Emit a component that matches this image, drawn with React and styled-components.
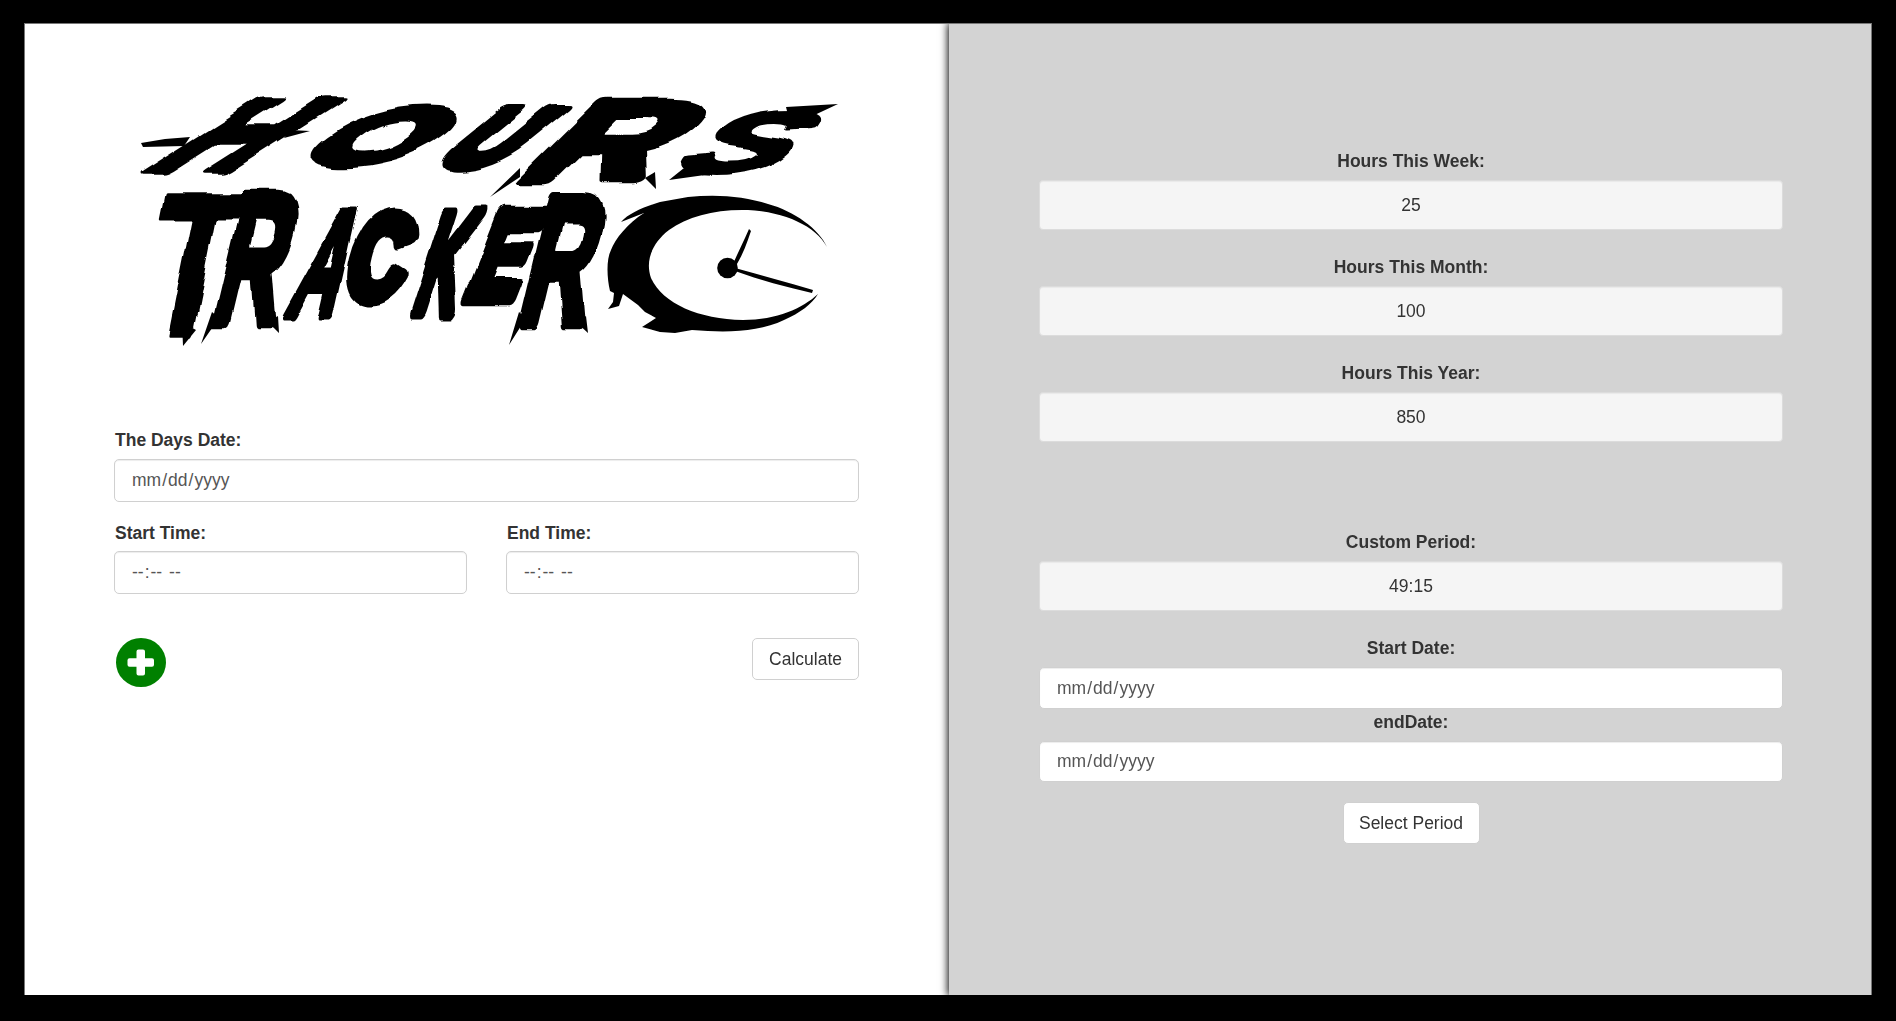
import React from "react";
import styled, { createGlobalStyle } from "styled-components";

const Global = createGlobalStyle`
  * { box-sizing: border-box; }
  html, body { margin: 0; padding: 0; background: #000; }
  body {
    font-family: "Liberation Sans", Arial, sans-serif;
    font-size: 17.5px;
    line-height: 24px;
    color: #333;
  }
`;

const Page = styled.div`
  height: 1021px;
  padding: 23px 24px 26px;
  background: #000;
  overflow: hidden;
`;

const Frame = styled.main`
  height: 972px;
  display: grid;
  grid-template-columns: 924px 922px;
  border: solid #777;
  border-width: 1px 1px 0;
  overflow: hidden;
`;

const EntryPanel = styled.section`
  background: #fff;
  padding: 6px 90px 0 89px;
`;

const SummaryPanel = styled.section`
  background: #d3d3d3;
  padding: 125px 88px 0 90px;
  box-shadow: 0 0 8px 1px #000;
`;

const Wordmark = styled.svg`
  display: block;
  width: 809px;
  height: 360px;
  margin: 0 0 38px -64px;
  overflow: visible;
`;

const Label = styled.label`
  display: block;
  height: 24px;
  font-weight: 700;
  padding-left: ${(p) => (p.$center ? 0 : 1)}px;
  margin-bottom: ${(p) => p.$gap ?? 7}px;
  text-align: ${(p) => (p.$center ? "center" : "left")};
`;

const FieldBox = styled.div`
  display: flex;
  align-items: center;
  height: ${(p) => p.$height ?? 43}px;
  padding: 0 16px 1px;
  margin-bottom: ${(p) => p.$after ?? 0}px;
  color: #555;
  background: #fff;
  border: 1px solid #d0d0d0;
  border-radius: 5px;
  box-shadow: inset 0 1px 1px rgba(0, 0, 0, 0.075);
`;

const Segment = styled.span`
  padding: 0 1px;
`;

const Separator = styled.span`
  white-space: pre;
`;

const TimeRow = styled.div`
  display: grid;
  grid-template-columns: 353px 353px;
  justify-content: space-between;
`;

const Actions = styled.div`
  display: flex;
  justify-content: space-between;
  align-items: flex-start;
  margin-top: 44px;
`;

const Button = styled.button`
  height: 42px;
  width: ${(p) => p.$width}px;
  padding: 0 0 1px;
  font: inherit;
  color: #333;
  background: #fff;
  border: 1px solid #d0d0d0;
  border-radius: 5px;
`;

const AddButton = styled.button`
  padding: 0;
  margin-left: 2px;
  border: 0;
  background: none;
  line-height: 0;
`;

const Well = styled.div`
  height: 50px;
  padding-top: 12px;
  text-align: center;
  background: #f5f5f5;
  border: 1px solid #dcdcdc;
  border-radius: 4px;
  box-shadow: inset 0 1px 1px rgba(0, 0, 0, 0.05);
  margin-bottom: ${(p) => p.$after}px;
`;

const Centered = styled.div`
  display: flex;
  justify-content: center;
`;

// Ink extents of each capital at a 100px font size.
const INK = {
  H: [6.7, 65.5], O: [4.1, 73.7], U: [6.1, 65.9], R: [6.7, 70.3], S: [3.2, 62.4],
  T: [2.1, 59], A: [0.6, 71.6], C: [4.2, 69.7], K: [6.7, 71.5], E: [6.7, 62.8],
};
const CAP = 68.8;

const LINES = [
  [
    { ch: "H", x: 148, w: 80, base: 171, h: 70, lean: 110, bold: 12 },
    { ch: "O", x: 298, w: 102, base: 163, h: 53, lean: 72, bold: 13 },
    { ch: "U", x: 437, w: 58, base: 165, h: 55, lean: 68, bold: 14 },
    { ch: "R", x: 522, w: 118, base: 180, h: 79, lean: 80, bold: 13 },
    { ch: "S", x: 670, w: 92, base: 172, h: 59, lean: 70, bold: 7 },
  ],
  [
    { ch: "T", x: 140, w: 82, base: 336, h: 141, lean: 28, bold: 3 },
    { ch: "R", x: 215, w: 58, base: 322, h: 126, lean: 30, bold: 10 },
    { ch: "A", x: 285, w: 48, base: 315, h: 104, lean: 40, bold: 9 },
    { ch: "C", x: 345, w: 52, base: 297, h: 80, lean: 20, bold: 13 },
    { ch: "K", x: 412, w: 42, base: 313, h: 100, lean: 32, bold: 12 },
    { ch: "E", x: 468, w: 45, base: 299, h: 86, lean: 34, bold: 11 },
    { ch: "R", x: 522, w: 58, base: 323, h: 125, lean: 30, bold: 10 },
  ],
];

function Letter({ ch, x, w, base, h, lean, bold }) {
  const [l, r] = INK[ch];
  const a = w / (r - l);
  const m = [a, 0, -lean / CAP, h / CAP, x - a * l, base];
  return (
    <text
      transform={`matrix(${m.join(" ")})`}
      fontFamily="Liberation Sans, Arial, sans-serif"
      fontWeight="700"
      fontSize="100"
      stroke="#000"
      strokeWidth={bold}
      strokeLinejoin="round"
      vectorEffect="non-scaling-stroke"
    >
      {ch}
    </text>
  );
}

function Logo() {
  return (
    <Wordmark viewBox="50 30 809 360" role="img" aria-label="Hours Tracker">
      <defs>
        <filter id="rough" x="-5%" y="-5%" width="110%" height="110%">
          <feTurbulence type="fractalNoise" baseFrequency="0.025" numOctaves="1" seed="4" />
          <feDisplacementMap in="SourceGraphic" scale="12" xChannelSelector="R" yChannelSelector="G" />
          <feGaussianBlur stdDeviation="0.6" />
        </filter>
      </defs>
      <g filter="url(#rough)">
        {LINES.map((line, i) => (
          <g key={i}>
            {line.map((l, j) => <Letter key={j} {...l} />)}
          </g>
        ))}
      </g>
      {/* dry brush trails */}
      <path d="M520 168 L490 197 L520 177Z M212 312 L201 344 L219 318Z M519 312 L509 345 L526 318Z M182 322 L183 346 L196 330Z M141 143 L165 139 L190 137 L184 146 L143 147Z M290 130 L310 131 L284 138Z M786 107 L838 104 L806 119 L790 123Z M669 180 L684 168 L712 174Z M268 322 L279 333 L278 316Z M576 322 L588 333 L586 316Z M645 178 L656 189 L655 172Z" />
      {/* clock face and hands */}
      <path d="M827 247 C819 229 794 211 768 204 C744 196 716 194 688 197 L660 202 C644 207 629 213 621 222 L644 213 C628 223 615 239 611 250 C606 260 607 278 610 291 L614 293 L613 302 L608 309 L619 306 L623 294 L638 305 L645 312 L656 318 L642 327 L660 332 L675 333 L692 330 C728 333 759 332 784 320 C800 313 812 304 818 294 C803 308 777 320 743 320 C699 319 663 304 651 278 C645 261 652 243 669 230 C688 216 716 209 748 210 C785 212 816 226 827 247Z" />
      <circle cx="727.5" cy="268" r="10.3" />
      <path d="M733 264 C738 252 744 241 749 229 L751 231 C747 243 743 254 737 264Z M735 268 C760 275 787 282 813 290 L812 293 C786 287 760 280 735 271Z" />
    </Wordmark>
  );
}

function DateField(props) {
  return (
    <FieldBox {...props}>
      <Segment>mm</Segment><Separator>/</Separator>
      <Segment>dd</Segment><Separator>/</Separator>
      <Segment>yyyy</Segment>
    </FieldBox>
  );
}

function TimeField() {
  return (
    <FieldBox>
      <Segment>--</Segment><Separator>:</Separator>
      <Segment>--</Segment><Separator> </Separator>
      <Segment>--</Segment>
    </FieldBox>
  );
}

export default function App() {
  return (
    <Page>
      <Global />
      <Frame>
        <EntryPanel>
          <Logo />
          <Label>The Days Date:</Label>
          <DateField $after={19} />
          <TimeRow>
            <div>
              <Label $gap={6}>Start Time:</Label>
              <TimeField />
            </div>
            <div>
              <Label $gap={6}>End Time:</Label>
              <TimeField />
            </div>
          </TimeRow>
          <Actions>
            <AddButton aria-label="Add">
              <svg width="50" height="49" viewBox="0 0 50 49">
                <ellipse cx="25" cy="24.5" rx="25" ry="24.5" fill="#008000" />
                <path d="M22.5 11.5h4.5a2 2 0 0 1 2 2v6.7h7a2 2 0 0 1 2 2v4.6a2 2 0 0 1-2 2h-7v6.7a2 2 0 0 1-2 2h-4.5a2 2 0 0 1-2-2v-6.7h-7a2 2 0 0 1-2-2v-4.6a2 2 0 0 1 2-2h7v-6.7a2 2 0 0 1 2-2z" fill="#fff" />
              </svg>
            </AddButton>
            <Button $width={107}>Calculate</Button>
          </Actions>
        </EntryPanel>
        <SummaryPanel>
          <Label $center>Hours This Week:</Label>
          <Well $after={25}>25</Well>
          <Label $center>Hours This Month:</Label>
          <Well $after={25}>100</Well>
          <Label $center>Hours This Year:</Label>
          <Well $after={88}>850</Well>
          <Label $center>Custom Period:</Label>
          <Well $after={25}>49:15</Well>
          <Label $center>Start Date:</Label>
          <DateField $height={42} $after={1} />
          <Label $center>endDate:</Label>
          <DateField $height={41} $after={20} />
          <Centered>
            <Button $width={137}>Select Period</Button>
          </Centered>
        </SummaryPanel>
      </Frame>
    </Page>
  );
}
